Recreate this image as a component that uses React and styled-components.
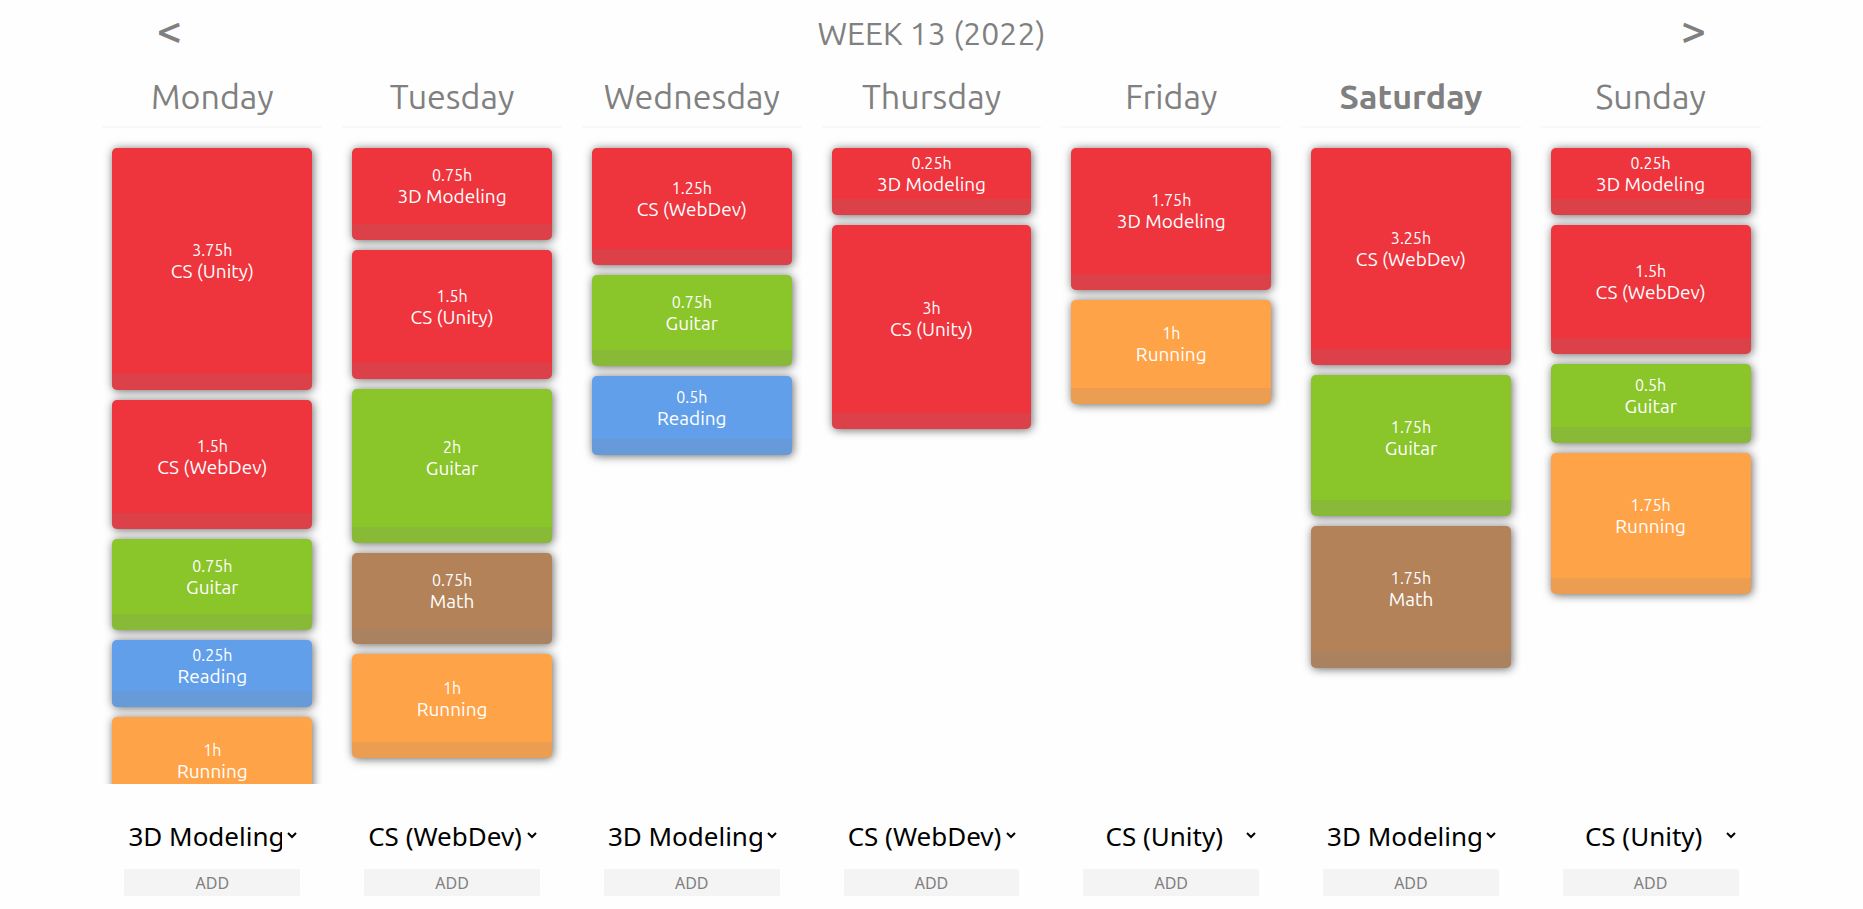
import React from "react";
import styled, { createGlobalStyle } from "styled-components";

const GlobalStyle = createGlobalStyle`
  *, *::before, *::after { box-sizing: border-box; }
  body {
    margin: 0;
    background: #fefefe;
    color: #808080;
    font-family: Ubuntu, "Noto Sans", sans-serif;
  }
`;

const Page = styled.div`
  display: flex;
  flex-direction: column;
  width: 89%;
  height: 100vh;
  min-height: 480px;
  margin: 0 auto;
`;

const WeekBar = styled.header`
  display: flex;
  flex: none;
  align-items: center;
  justify-content: space-between;
  height: 66px;
  padding: 0 52px;
`;

const WeekTitle = styled.h1`
  margin: 0;
  font-size: 32px;
  font-weight: 400;
  line-height: 40px;
`;

const ArrowButton = styled.button`
  width: 30px;
  padding: 0 0 6px;
  border: 0;
  background: transparent;
  color: inherit;
  font-family: inherit;
  font-size: 45px;
  font-weight: 500;
  line-height: 40px;
  cursor: pointer;
`;

const Week = styled.main`
  display: grid;
  flex: 1;
  grid-template-columns: repeat(7, minmax(0, 1fr));
  gap: 20px;
  min-height: 0;
`;

const Day = styled.section`
  display: flex;
  flex-direction: column;
  min-width: 0;
  min-height: 0;
`;

const DayName = styled.h2`
  flex: none;
  margin: 0;
  padding: 10px 0;
  border-bottom: 2px solid #f8f8f8;
  font-size: 34px;
  font-weight: ${(p) => (p.$today ? 700 : 400)};
  line-height: 40px;
  text-align: center;
`;

const Entries = styled.div`
  display: flex;
  flex: 1;
  flex-direction: column;
  gap: 10px;
  min-height: 0;
  padding: 20px 10px;
  overflow-y: auto;
  scrollbar-width: none;
`;

const Entry = styled.article`
  display: flex;
  flex: none;
  flex-direction: column;
  overflow: hidden;
  border-radius: 5px;
  background: ${(p) => p.$color};
  box-shadow: 1px 1px 10px rgba(0, 0, 0, 0.6);
  color: #fff;
  text-align: center;

  &::after {
    content: "";
    height: 16px;
    background: rgba(128, 128, 128, 0.16);
  }
`;

const EntryBody = styled.div`
  display: flex;
  flex: 1;
  flex-direction: column;
  justify-content: center;
  padding-top: 1px;
`;

const Hours = styled.span`
  font-size: 16px;
  line-height: 20px;
`;

const Activity = styled.span`
  font-size: 19px;
  line-height: 22px;
`;

const AddForm = styled.form`
  display: flex;
  flex: none;
  flex-direction: column;
  gap: 14px;
  width: 80%;
  margin: 0 auto;
  padding: 32px 0 13px;
`;

const ActivitySelect = styled.select`
  width: 100%;
  height: 39px;
  padding: 0 2px 0 0;
  border: 0;
  background: transparent;
  color: #000;
  font-family: "Noto Sans", sans-serif;
  font-size: 26px;
  text-align: center;
`;

const AddButton = styled.button`
  height: 27px;
  padding: 0;
  border: 0;
  border-radius: 2px;
  background: #f4f4f4;
  color: #808080;
  font-family: "Noto Sans", sans-serif;
  font-size: 16px;
  line-height: 28px;
  cursor: pointer;
`;

const COLORS = {
  "3D Modeling": "#ee343d",
  "CS (Unity)": "#ee343d",
  "CS (WebDev)": "#ee343d",
  Guitar: "#8ac52a",
  Math: "#b38259",
  Reading: "#629fea",
  Running: "#ffa348",
};

const DAYS = [
  {
    name: "Monday",
    next: "3D Modeling",
    entries: [
      [3.75, "CS (Unity)"],
      [1.5, "CS (WebDev)"],
      [0.75, "Guitar"],
      [0.25, "Reading"],
      [1, "Running"],
    ],
  },
  {
    name: "Tuesday",
    next: "CS (WebDev)",
    entries: [
      [0.75, "3D Modeling"],
      [1.5, "CS (Unity)"],
      [2, "Guitar"],
      [0.75, "Math"],
      [1, "Running"],
    ],
  },
  {
    name: "Wednesday",
    next: "3D Modeling",
    entries: [
      [1.25, "CS (WebDev)"],
      [0.75, "Guitar"],
      [0.5, "Reading"],
    ],
  },
  {
    name: "Thursday",
    next: "CS (WebDev)",
    entries: [
      [0.25, "3D Modeling"],
      [3, "CS (Unity)"],
    ],
  },
  {
    name: "Friday",
    next: "CS (Unity)",
    entries: [
      [1.75, "3D Modeling"],
      [1, "Running"],
    ],
  },
  {
    name: "Saturday",
    today: true,
    next: "3D Modeling",
    entries: [
      [3.25, "CS (WebDev)"],
      [1.75, "Guitar"],
      [1.75, "Math"],
    ],
  },
  {
    name: "Sunday",
    next: "CS (Unity)",
    entries: [
      [0.25, "3D Modeling"],
      [1.5, "CS (WebDev)"],
      [0.5, "Guitar"],
      [1.75, "Running"],
    ],
  },
];

// Every entry has room for its two lines and grip, plus 50px for each hour.
const entryHeight = (hours) => 54 + hours * 50;

function DayColumn({ day }) {
  return (
    <Day>
      <DayName $today={day.today}>{day.name}</DayName>
      <Entries>
        {day.entries.map(([hours, activity]) => (
          <Entry
            key={activity}
            $color={COLORS[activity]}
            style={{ height: entryHeight(hours) }}
          >
            <EntryBody>
              <Hours>{hours}h</Hours>
              <Activity>{activity}</Activity>
            </EntryBody>
          </Entry>
        ))}
      </Entries>
      <AddForm onSubmit={(e) => e.preventDefault()}>
        <ActivitySelect
          aria-label={`Activity for ${day.name}`}
          defaultValue={day.next}
        >
          {Object.keys(COLORS).map((activity) => (
            <option key={activity}>{activity}</option>
          ))}
        </ActivitySelect>
        <AddButton type="submit">ADD</AddButton>
      </AddForm>
    </Day>
  );
}

export default function App() {
  return (
    <>
      <GlobalStyle />
      <Page>
        <WeekBar>
          <ArrowButton type="button" aria-label="Previous week">
            &lt;
          </ArrowButton>
          <WeekTitle>WEEK 13 (2022)</WeekTitle>
          <ArrowButton type="button" aria-label="Next week">
            &gt;
          </ArrowButton>
        </WeekBar>
        <Week>
          {DAYS.map((day) => (
            <DayColumn key={day.name} day={day} />
          ))}
        </Week>
      </Page>
    </>
  );
}
